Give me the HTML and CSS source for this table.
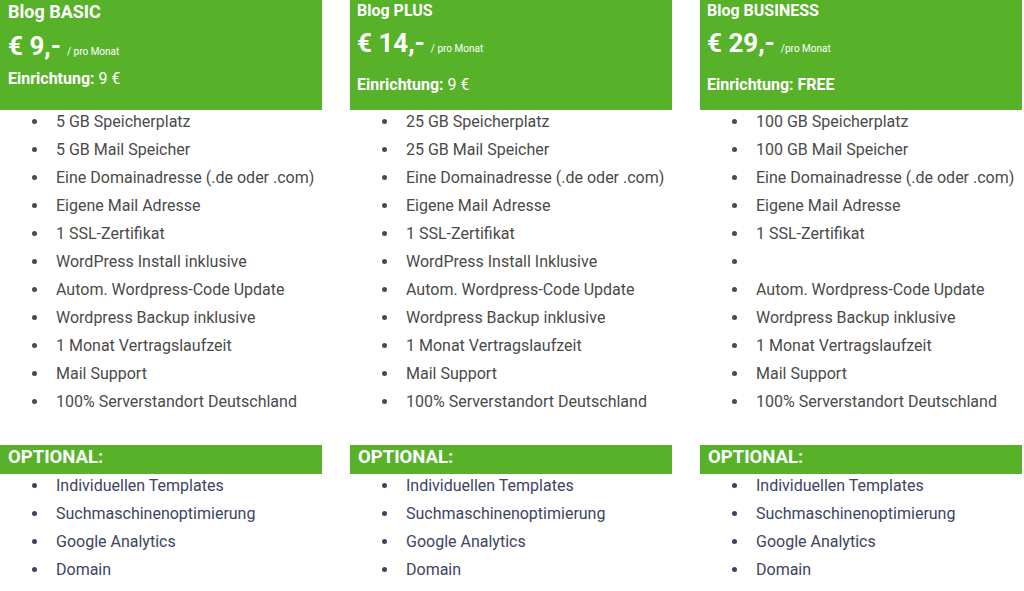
FILE: index.html
```html
<!DOCTYPE html>
<html lang="de">
<head>
<meta charset="utf-8">
<title>Blog Pakete</title>
<link rel="stylesheet" href="styles.css">
</head>
<body>
<div class="plans">
  <section class="plan plan-basic">
    <div class="head">
      <div class="title">Blog BASIC</div>
      <div class="price"><span class="amount">€ 9,-</span> <span class="per">/ pro Monat</span></div>
      <div class="setup">Einrichtung: <span class="light">9 €</span></div>
    </div>
    <ul class="features">
      <li>5 GB Speicherplatz</li>
      <li>5 GB Mail Speicher</li>
      <li>Eine Domainadresse (.de oder .com)</li>
      <li>Eigene Mail Adresse</li>
      <li>1 SSL-Zertifikat</li>
      <li>WordPress Install inklusive</li>
      <li>Autom. Wordpress-Code Update</li>
      <li>Wordpress Backup inklusive</li>
      <li>1 Monat Vertragslaufzeit</li>
      <li>Mail Support</li>
      <li>100% Serverstandort Deutschland</li>
    </ul>
    <div class="opt-bar">OPTIONAL:</div>
    <ul class="features optional">
      <li>Individuellen Templates</li>
      <li>Suchmaschinenoptimierung</li>
      <li>Google Analytics</li>
      <li>Domain</li>
    </ul>
  </section>

  <section class="plan">
    <div class="head">
      <div class="title">Blog PLUS</div>
      <div class="price"><span class="amount">€ 14,-</span> <span class="per">/ pro Monat</span></div>
      <div class="setup">Einrichtung: <span class="light">9 €</span></div>
    </div>
    <ul class="features">
      <li>25 GB Speicherplatz</li>
      <li>25 GB Mail Speicher</li>
      <li>Eine Domainadresse (.de oder .com)</li>
      <li>Eigene Mail Adresse</li>
      <li>1 SSL-Zertifikat</li>
      <li>WordPress Install Inklusive</li>
      <li>Autom. Wordpress-Code Update</li>
      <li>Wordpress Backup inklusive</li>
      <li>1 Monat Vertragslaufzeit</li>
      <li>Mail Support</li>
      <li>100% Serverstandort Deutschland</li>
    </ul>
    <div class="opt-bar">OPTIONAL:</div>
    <ul class="features optional">
      <li>Individuellen Templates</li>
      <li>Suchmaschinenoptimierung</li>
      <li>Google Analytics</li>
      <li>Domain</li>
    </ul>
  </section>

  <section class="plan">
    <div class="head">
      <div class="title">Blog BUSINESS</div>
      <div class="price"><span class="amount">€ 29,-</span> <span class="per">/pro Monat</span></div>
      <div class="setup">Einrichtung: FREE</div>
    </div>
    <ul class="features">
      <li>100 GB Speicherplatz</li>
      <li>100 GB Mail Speicher</li>
      <li>Eine Domainadresse (.de oder .com)</li>
      <li>Eigene Mail Adresse</li>
      <li>1 SSL-Zertifikat</li>
      <li>&nbsp;</li>
      <li>Autom. Wordpress-Code Update</li>
      <li>Wordpress Backup inklusive</li>
      <li>1 Monat Vertragslaufzeit</li>
      <li>Mail Support</li>
      <li>100% Serverstandort Deutschland</li>
    </ul>
    <div class="opt-bar">OPTIONAL:</div>
    <ul class="features optional">
      <li>Individuellen Templates</li>
      <li>Suchmaschinenoptimierung</li>
      <li>Google Analytics</li>
      <li>Domain</li>
    </ul>
  </section>
</div>
</body>
</html>
```

FILE: styles.css
```css
html, body {
  margin: 0;
  padding: 0;
  background: #ffffff;
}
body {
  font-family: Roboto, "Liberation Sans", Arial, sans-serif;
  width: 1024px;
  height: 591px;
  overflow: hidden;
}
.plans {
  display: grid;
  grid-template-columns: 322px 322px 322px;
  column-gap: 28px;
}
.plan {
  display: flex;
  flex-direction: column;
}
.head {
  background: #57b22a;
  color: #ffffff;
  height: 110px;
  padding: 0 7px;
  box-sizing: border-box;
  font-weight: 700;
}
.title {
  font-size: 16px;
  height: 22px;
  line-height: 22px;
}
.price {
  height: 42px;
  line-height: 42px;
  white-space: nowrap;
}
.amount {
  font-size: 26px;
}
.per {
  font-size: 10px;
  font-weight: 400;
  margin-left: 2px;
}
.setup {
  font-size: 16px;
  height: 22px;
  line-height: 22px;
  margin-top: 10px;
}
.light {
  font-weight: 400;
}
.plan-basic .head {
  padding-left: 8px;
}
.plan-basic .title {
  font-size: 18px;
  height: 24px;
  line-height: 24px;
}
.plan-basic .price {
  height: 44px;
  line-height: 44px;
}
.plan-basic .setup {
  margin-top: 0;
}
.features {
  list-style: disc;
  margin: -2px 0 0 0;
  padding: 0 0 0 49px;
  font-size: 16px;
  line-height: 28px;
  color: #4a4a4a;
}
.features li {
  padding-left: 7px;
}
.features li::marker {
  font-size: 16px;
}
.opt-bar {
  margin-top: 29px;
  height: 29px;
  line-height: 24px;
  background: #57b22a;
  color: #ffffff;
  font-weight: 700;
  font-size: 18.5px;
  padding-left: 8px;
}
.optional {
  color: #3c4463;
}
```
